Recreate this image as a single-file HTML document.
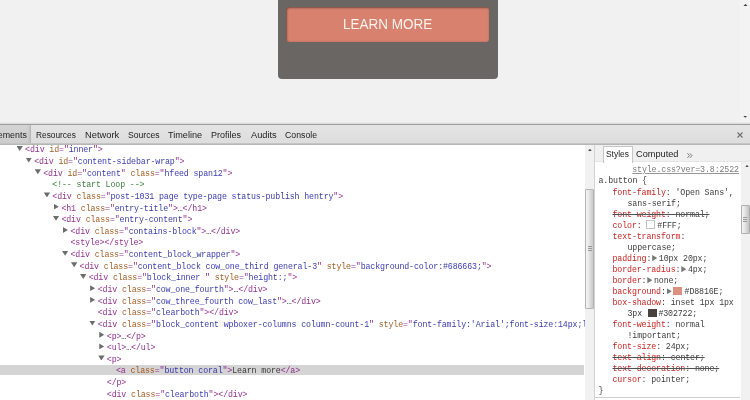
<!DOCTYPE html>
<html>
<head>
<meta charset="utf-8">
<style>
*{margin:0;padding:0;box-sizing:border-box;}
html,body{width:750px;height:400px;overflow:hidden;background:#f1f1f1;font-family:"Liberation Sans",sans-serif;}
#page{position:absolute;left:0;top:0;width:750px;height:123px;background:#f1f1f1;overflow:hidden;}
#box{position:absolute;left:277.9px;top:-10px;width:220.4px;height:89.4px;background:#6a6664;border-radius:4px;}
#btn{position:absolute;left:286px;top:6.8px;width:203.2px;height:35.1px;background:#d8816e;border-radius:3px;color:#fcf2ee;font-size:15px;line-height:35px;text-align:center;box-shadow:inset 0.8px 0.8px 2px rgba(48,39,34,.7);}
#btn span{display:inline-block;transform:scaleX(.9);position:relative;top:-0.6px;left:0.3px;}
#pscroll{position:absolute;left:740.3px;top:0;width:10px;height:123px;background:#f3f3f3;}
#pscroll i{position:absolute;left:2.6px;top:115.6px;width:4.6px;height:2.1px;background:#3a3a3a;clip-path:polygon(0 0,100% 0,50% 100%);}
#tb{position:absolute;left:0;top:122px;width:750px;height:23px;z-index:5;background:linear-gradient(to bottom,#eaeaea 0,#eaeaea 1px,#dcdcdc 1px,#dcdcdc 2px,#9e9e9e 2px,#9e9e9e 3px,#e4e4e4 3px,#dddddd 21px,#c4c4c4 21px,#c4c4c4 22px,#b6b6b6 22px,#b6b6b6 23px);font-size:9.6px;color:#232323;}
#tb span{position:absolute;top:7px;line-height:11px;white-space:nowrap;display:inline-block;transform-origin:0 50%;}
#tb .sel{left:0;top:3px;width:31px;height:18px;background:linear-gradient(#d4d4d4,#cdcdcd);border-right:1px solid #b8b8b8;box-shadow:inset -2px 0 2px -1px rgba(0,0,0,.08);}
#close{position:absolute;left:736.9px;top:9.6px;width:6px;height:6px;}
#el{position:absolute;left:0;top:144px;width:585px;height:256px;background:#fff;overflow:hidden;}
#tree{position:absolute;left:0;top:0.3px;width:585px;font-family:"Liberation Mono",monospace;font-size:8.3px;letter-spacing:-0.135px;line-height:11.65px;color:#222;white-space:pre;}
#tree div{height:11.65px;position:relative;}
#selrow{position:absolute;left:0;top:221.2px;width:584.2px;height:9.7px;background:#d4d4d4;}
#tree,#css,#tb span,#stabs span{filter:blur(0.35px);}
#tree,#css{opacity:.88;}
.t{color:#881280;}.n{color:#994500;}.v{color:#1a1aa6;}.c{color:#236e25;}
.a{position:absolute;background:#585858;}
.ad{width:6.4px;height:5px;top:1.6px;margin-left:-0.4px;clip-path:polygon(0 0,100% 0,50% 100%);}
.ar{width:5px;height:5.8px;top:1.3px;clip-path:polygon(0 0,100% 50%,0 100%);}
#esc{position:absolute;left:585px;top:144px;width:9.4px;height:256px;background:#f1f1f1;}
#esc b{position:absolute;left:0.4px;top:45px;width:8.8px;height:119.5px;background:linear-gradient(90deg,#f4f4f4,#ececec 30%,#c8c8c8);border:1px solid #b4b4b4;border-radius:1px;}
#esc u{position:absolute;left:2.5px;width:4px;height:1px;background:#999;}
.up{position:absolute;width:3.6px;height:2.4px;background:#505050;clip-path:polygon(50% 0,100% 100%,0 100%);}
#side{position:absolute;left:594.3px;top:144px;width:156px;height:257px;background:#fff;border-left:1.2px solid #d2d2d2;overflow:hidden;}
#stabs{position:absolute;left:0;top:0;width:156px;height:18px;background:#f0f0f0;border-bottom:1px solid #e6e6e6;font-size:9.6px;color:#232323;}
#stabs .on{position:absolute;left:7.7px;top:1.6px;width:29.6px;height:17px;background:#fff;border:1px solid #c6c6c6;border-bottom:none;}
#stabs span{position:absolute;top:3.8px;line-height:11px;display:inline-block;transform-origin:0 50%;white-space:nowrap;}
#css{position:absolute;left:0.2px;top:20.4px;width:146px;font-family:"Liberation Mono",monospace;font-size:8.3px;letter-spacing:-0.13px;line-height:11.074px;color:#222;white-space:pre;}
#css div{height:11.074px;position:relative;}
.p{color:#c80000;}
.x{text-decoration:line-through;text-decoration-color:#3a3a3a;text-decoration-thickness:0.9px;}
.sw{display:inline-block;width:8.8px;height:8.5px;vertical-align:-1.1px;margin:0 2.4px 0 0;}
.sw.w{border:1px solid #bdbdbd;}
.e{display:inline-block;width:7.5px;height:5.8px;position:relative;vertical-align:-0.2px;}
.e:before{content:"";position:absolute;left:0.9px;top:-0.3px;width:5.1px;height:6.2px;background:#666;clip-path:polygon(0 0,100% 50%,0 100%);}
#ssc{position:absolute;left:740.8px;top:161.5px;width:10px;height:239px;background:#f1f1f1;}
#ssc b{position:absolute;left:0.3px;top:43.5px;width:9px;height:28.5px;background:linear-gradient(90deg,#f2f2f2,#e8e8e8 35%,#c2c2c2);border:1px solid #b0b0b0;border-radius:1px;}
#ssc u{position:absolute;left:2.6px;width:4px;height:1px;background:#9a9a9a;}
#sline{position:absolute;left:595px;top:396.7px;width:145.4px;height:1px;background:#cfcfcf;}
</style>
</head>
<body>
<div id="page">
  <div id="box"></div>
  <div id="btn"><span>LEARN MORE</span></div>
  <div id="pscroll"><i></i><em class="up" style="left:2.9px;top:3.9px;width:4.6px;height:2.4px;background:#3a3a3a"></em></div>
</div>
<div id="tb">
  <span class="sel"></span>
  <span style="left:-10.3px;transform:scaleX(.92)">Elements</span>
  <span style="left:36.2px;transform:scaleX(.868)">Resources</span>
  <span style="left:85.3px;transform:scaleX(.971)">Network</span>
  <span style="left:127.8px;transform:scaleX(.898)">Sources</span>
  <span style="left:168.4px;transform:scaleX(.949)">Timeline</span>
  <span style="left:211.4px;transform:scaleX(.936)">Profiles</span>
  <span style="left:250.6px;transform:scaleX(.965)">Audits</span>
  <span style="left:284.5px;transform:scaleX(.91)">Console</span>
  <svg id="close" viewBox="0 0 6 6"><path d="M0.5 0.5L5.5 5.5M5.5 0.5L0.5 5.5" stroke="#707070" stroke-width="1.15" fill="none"/></svg>
</div>
<div id="el">
<div id="selrow"></div>
<div id="tree"><div style="padding-left:25.10px"><i class="a ad" style="left:16.90px"></i><span class="t">&lt;div <span class="n">id</span>="<span class="v">inner</span>"&gt;</span></div><div style="padding-left:34.18px"><i class="a ad" style="left:25.98px"></i><span class="t">&lt;div <span class="n">id</span>="<span class="v">content-sidebar-wrap</span>"&gt;</span></div><div style="padding-left:43.26px"><i class="a ad" style="left:35.06px"></i><span class="t">&lt;div <span class="n">id</span>="<span class="v">content</span>" <span class="n">class</span>="<span class="v">hfeed span12</span>"&gt;</span></div><div style="padding-left:52.34px"><span class="c">&lt;!-- start Loop --&gt;</span></div><div style="padding-left:52.34px"><i class="a ad" style="left:44.14px"></i><span class="t">&lt;div <span class="n">class</span>="<span class="v">post-1031 page type-page status-publish hentry</span>"&gt;</span></div><div style="padding-left:61.42px"><i class="a ar" style="left:53.82px"></i><span class="t">&lt;h1 <span class="n">class</span>="<span class="v">entry-title</span>"&gt;</span>…<span class="t">&lt;/h1&gt;</span></div><div style="padding-left:61.42px"><i class="a ad" style="left:53.22px"></i><span class="t">&lt;div <span class="n">class</span>="<span class="v">entry-content</span>"&gt;</span></div><div style="padding-left:70.50px"><i class="a ar" style="left:62.90px"></i><span class="t">&lt;div <span class="n">class</span>="<span class="v">contains-block</span>"&gt;</span>…<span class="t">&lt;/div&gt;</span></div><div style="padding-left:70.50px"><span class="t">&lt;style&gt;</span><span class="t">&lt;/style&gt;</span></div><div style="padding-left:70.50px"><i class="a ad" style="left:62.30px"></i><span class="t">&lt;div <span class="n">class</span>="<span class="v">content_block_wrapper</span>"&gt;</span></div><div style="padding-left:79.58px"><i class="a ad" style="left:71.38px"></i><span class="t">&lt;div <span class="n">class</span>="<span class="v">content_block cow_one_third general-3</span>" <span class="n">style</span>="<span class="v">background-color:#686663;</span>"&gt;</span></div><div style="padding-left:88.66px"><i class="a ad" style="left:80.46px"></i><span class="t">&lt;div <span class="n">class</span>="<span class="v">block_inner </span>" <span class="n">style</span>="<span class="v">height:;</span>"&gt;</span></div><div style="padding-left:97.74px"><i class="a ar" style="left:90.14px"></i><span class="t">&lt;div <span class="n">class</span>="<span class="v">cow_one_fourth</span>"&gt;</span>…<span class="t">&lt;/div&gt;</span></div><div style="padding-left:97.74px"><i class="a ar" style="left:90.14px"></i><span class="t">&lt;div <span class="n">class</span>="<span class="v">cow_three_fourth cow_last</span>"&gt;</span>…<span class="t">&lt;/div&gt;</span></div><div style="padding-left:97.74px"><span class="t">&lt;div <span class="n">class</span>="<span class="v">clearboth</span>"&gt;</span><span class="t">&lt;/div&gt;</span></div><div style="padding-left:97.74px"><i class="a ad" style="left:89.54px"></i><span class="t">&lt;div <span class="n">class</span>="<span class="v">block_content wpboxer-columns column-count-1</span>" <span class="n">style</span>="<span class="v">font-family:'Arial';font-size:14px;l</span></span></div><div style="padding-left:106.82px"><i class="a ar" style="left:99.22px"></i><span class="t">&lt;p&gt;</span>…<span class="t">&lt;/p&gt;</span></div><div style="padding-left:106.82px"><i class="a ar" style="left:99.22px"></i><span class="t">&lt;ul&gt;</span>…<span class="t">&lt;/ul&gt;</span></div><div style="padding-left:106.82px"><i class="a ad" style="left:98.62px"></i><span class="t">&lt;p&gt;</span></div><div style="padding-left:115.90px"><span class="t">&lt;a <span class="n">class</span>="<span class="v">button coral</span>"&gt;</span>Learn more<span class="t">&lt;/a&gt;</span></div><div style="padding-left:106.82px"><span class="t">&lt;/p&gt;</span></div><div style="padding-left:106.82px"><span class="t">&lt;div <span class="n">class</span>="<span class="v">clearboth</span>"&gt;</span><span class="t">&lt;/div&gt;</span></div></div>
</div>
<div id="esc"><b></b><u style="top:102.3px"></u><u style="top:104.3px"></u><u style="top:106.3px"></u><i class="up" style="left:3.1px;top:4.6px"></i></div>
<div id="side">
  <div id="stabs"><div class="on"></div><span style="left:10.4px;transform:scaleX(.877)">Styles</span><span style="left:40.3px;transform:scaleX(.959)">Computed</span><svg style="position:absolute;left:91.9px;top:8.8px;width:5.8px;height:5.2px;filter:blur(.3px)" viewBox="0 0 5.8 5.2"><path d="M0.4 0.3L2.5 2.6L0.4 4.9M2.9 0.3L5 2.6L2.9 4.9" stroke="#707070" stroke-width="0.9" fill="none"/></svg></div>
  <div id="css"><div style="text-align:right;color:#686868;text-decoration:underline;text-decoration-color:#8a8a8a;top:-0.5px;padding-right:2.6px">style.css?ver=3.8:2522</div><div style="padding-left:3px">a.button {</div><div style="padding-left:17px"><span class="p">font-family</span>: 'Open Sans',</div><div style="padding-left:32px">sans-serif;</div><div style="padding-left:17px" class="x"><span class="p">font-weight</span>: normal;</div><div style="padding-left:17px"><span class="p">color</span>: <i class="sw w" style="background:#fff;margin-left:-0.3px"></i>#FFF;</div><div style="padding-left:17px"><span class="p">text-transform</span>:</div><div style="padding-left:32px">uppercase;</div><div style="padding-left:17px"><span class="p">padding</span>:<i class="e"></i>10px 20px;</div><div style="padding-left:17px"><span class="p">border-radius</span>:<i class="e"></i>4px;</div><div style="padding-left:17px"><span class="p">border</span>:<i class="e"></i>none;</div><div style="padding-left:17px"><span class="p">background</span>:<i class="e"></i><i class="sw" style="background:#d8816e"></i>#D8816E;</div><div style="padding-left:17px"><span class="p">box-shadow</span>: inset 1px 1px</div><div style="padding-left:32px">3px <i class="sw" style="background:#302722;margin-left:1.2px;margin-right:1.5px"></i>#302722;</div><div style="padding-left:17px"><span class="p">font-weight</span>: normal</div><div style="padding-left:32px">!important;</div><div style="padding-left:17px"><span class="p">font-size</span>: 24px;</div><div style="padding-left:17px" class="x"><span class="p">text-align</span>: center;</div><div style="padding-left:17px;top:-1px" class="x"><span class="p">text-decoration</span>: none;</div><div style="padding-left:17px;top:-1px"><span class="p">cursor</span>: pointer;</div><div style="padding-left:3px;top:-1px">}</div></div>
</div>
<div id="ssc"><i class="up" style="left:4.4px;top:3.3px"></i><b></b><u style="top:55.8px"></u><u style="top:57.8px"></u><u style="top:59.8px"></u></div>
<div id="sline"></div>
</body>
</html>
